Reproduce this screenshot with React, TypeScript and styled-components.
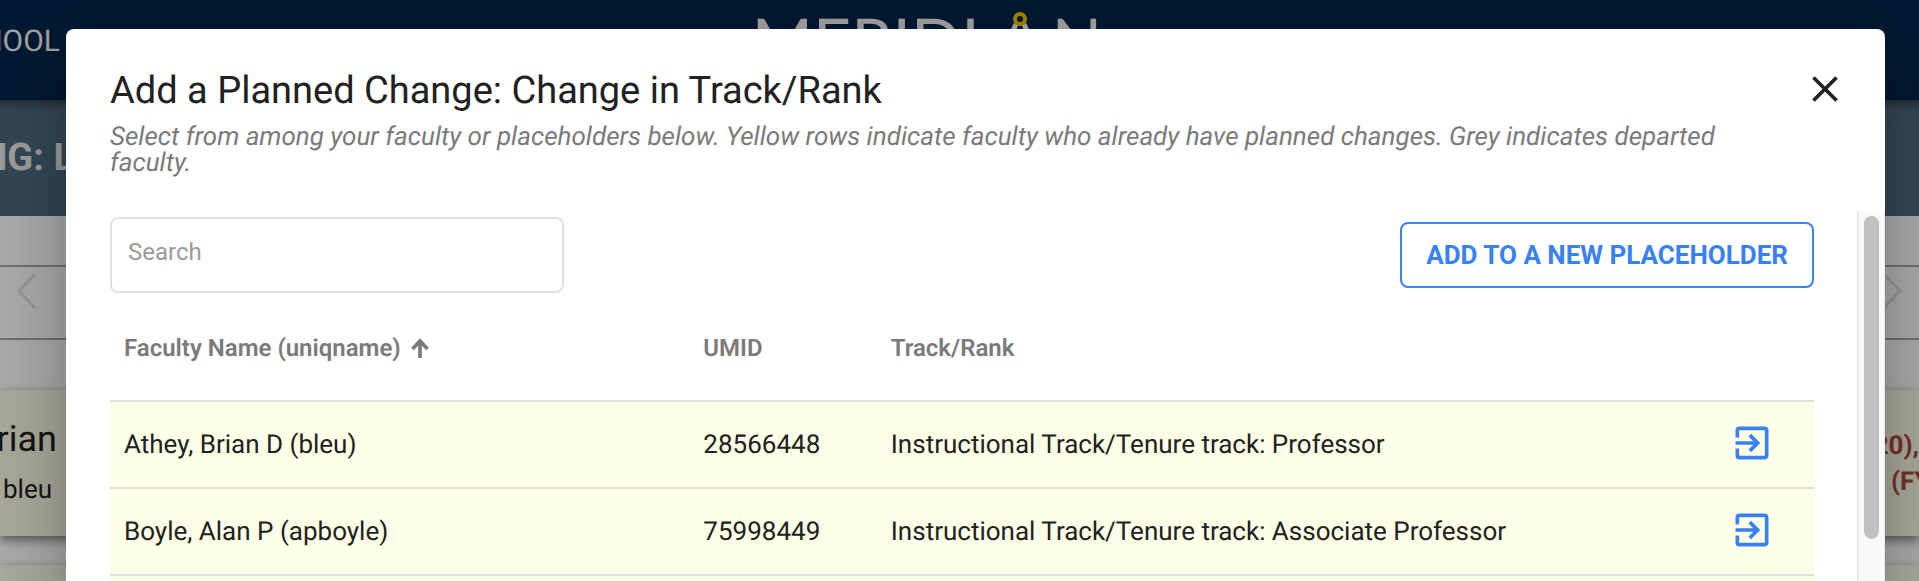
import React from "react";
import styled, { createGlobalStyle } from "styled-components";
import { MdClose, MdExitToApp } from "react-icons/md";

const GlobalStyle = createGlobalStyle`
  *, *::before, *::after { box-sizing: border-box; }
  body {
    margin: 0;
    font-family: Roboto, "Liberation Sans", sans-serif;
    font-size: 26px;
    color: #212121;
    background: #ffffff;
    text-rendering: geometricPrecision;
  }
`;

const Screen = styled.div`
  position: relative;
  height: 100vh;
  overflow: hidden;
`;

const Page = styled.div`
  display: flex;
  flex-direction: column;
`;

const Masthead = styled.header`
  display: grid;
  grid-template-columns: 60px 1fr 60px;
  height: 100px;
  background: #00274c;
  color: #f0f0f0;
`;

const SchoolName = styled.div`
  display: flex;
  justify-content: flex-end;
  padding-top: 16px;
  font-size: 30px;
  line-height: 52px;
`;

const Wordmark = styled.div`
  display: flex;
  justify-content: center;
  padding-top: 5px;
  padding-right: 65px;
  font: 400 66px/74px Lato, "Open Sans", sans-serif;
`;

const CompassIcon = styled.svg`
  width: 72px;
  height: 72px;
`;

const PlanBar = styled.div`
  display: flex;
  height: 116px;
  align-items: center;
  background: #4f6a80;
  box-shadow: inset 0 12px 10px -8px rgba(0, 0, 0, 0.4);
`;

const PlanTitle = styled.div`
  display: flex;
  justify-content: flex-end;
  width: 74px;
  color: #eaeaea;
  font-size: 38px;
  font-weight: 700;
  white-space: nowrap;
`;

const YearStrip = styled.div`
  display: flex;
  justify-content: space-between;
  align-items: flex-start;
  height: 75px;
  margin-top: 49px;
  padding: 6px 17px 0;
  border-top: 2px solid #a8a8a8;
  border-bottom: 2px solid #a8a8a8;
`;

const Chevron = styled.svg`
  width: 20px;
  height: 36px;
  fill: none;
  stroke: #e2e2e2;
  stroke-width: 3;
`;

const CardList = styled.div`
  display: flex;
  flex-direction: column;
  gap: 29px;
  padding-top: 50px;
`;

const Card = styled.div`
  display: flex;
  justify-content: space-between;
  height: 146px;
  background: #fdfde8;
  box-shadow: 0 4px 10px rgba(0, 0, 0, 0.5);
`;

const Person = styled.div`
  display: flex;
  flex-direction: column;
  align-items: flex-end;
  width: 57px;
  padding-top: 25px;
`;

const PersonName = styled.div`
  font-size: 36px;
  line-height: 48px;
`;

const PersonId = styled.div`
  padding-right: 5px;
  line-height: 54px;
`;

const Notes = styled.div`
  width: 38px;
  padding-top: 38px;
  color: #b0493f;
  font-weight: 700;
  line-height: 36px;
  white-space: nowrap;
`;

const NoteEnd = styled.div`
  display: flex;
  justify-content: flex-end;
`;

const NoteStart = styled.div`
  padding-left: 10px;
`;

const Overlay = styled.div`
  position: absolute;
  inset: 0;
  display: flex;
  padding: 29px 34px 0 66px;
  background: rgba(0, 0, 0, 0.32);
`;

const Dialog = styled.section`
  flex: 1;
  display: flex;
  flex-direction: column;
  background: #ffffff;
  border-radius: 8px 8px 0 0;
  box-shadow: 0 22px 30px -14px rgba(0, 0, 0, 0.2),
    0 48px 76px 6px rgba(0, 0, 0, 0.14), 0 18px 92px 16px rgba(0, 0, 0, 0.12);
`;

const DialogHeader = styled.header`
  display: flex;
  justify-content: space-between;
  align-items: flex-start;
  height: 182px;
  padding: 38px 38px 0 44px;
`;

const Title = styled.h1`
  margin: 0;
  font-size: 38px;
  font-weight: 400;
  line-height: 48px;
`;

const Hint = styled.p`
  margin: 9px 0 0;
  color: #7a7a7a;
  font-style: italic;
  line-height: 26px;
`;

const HeaderText = styled.div`
  flex: 1;
  padding-right: 60px;
`;

const IconButton = styled.button`
  display: flex;
  padding: 0;
  border: 0;
  background: none;
  color: ${(p) => p.color};
  font-size: 44px;
  cursor: pointer;
`;

const DialogBody = styled.div`
  flex: 1;
  display: flex;
  min-height: 0;
`;

const Content = styled.div`
  flex: 1;
  padding: 6px 43px 0 44px;
  overflow: hidden;
`;

const Toolbar = styled.div`
  display: flex;
  justify-content: space-between;
  align-items: center;
`;

const SearchInput = styled.input`
  width: 454px;
  height: 76px;
  padding: 0 16px 6px;
  border: 2px solid #e0e0e0;
  border-radius: 8px;
  color: inherit;
  font: 24px Roboto, sans-serif;
  &::placeholder { color: #9a9a9a; opacity: 1; }
`;

const OutlineButton = styled.button`
  height: 66px;
  padding: 0 24px;
  border: 2px solid #3b82f6;
  border-radius: 8px;
  background: #ffffff;
  color: #3880f5;
  font: 700 26px Roboto, sans-serif;
  cursor: pointer;
`;

const Table = styled.table`
  width: 100%;
  border-collapse: collapse;
  table-layout: fixed;
`;

const Th = styled.th<{ $width?: string }>`
  width: ${(p) => p.$width ?? "auto"};
  height: 108px;
  padding: 2px 0 0 14px;
  color: #7a7a7a;
  font-size: 24px;
  font-weight: 600;
  text-align: left;
`;

const SortLabel = styled.span`
  display: flex;
  align-items: center;
  gap: 10px;
`;

const SortIcon = styled.svg`
  width: 18px;
  height: 20px;
  fill: none;
  stroke: currentColor;
`;

const Row = styled.tr`
  background: #fdffe7;
  border-top: 2px solid #dfe0d3;
`;

const Td = styled.td<{ $action?: boolean }>`
  height: 87px;
  padding: ${(p) => (p.$action ? "0 0 4px 14px" : "0 0 0 14px")};
`;

const ScrollTrack = styled.div`
  width: 28px;
  padding: 5px 5px 0;
  border-left: 2px solid #e8e8e8;
  border-right: 1px solid #e8e8e8;
  background: #fafafa;
`;

const ScrollThumb = styled.div`
  height: 323px;
  border-radius: 8px;
  background: #c1c1c1;
`;

const faculty = [
  { name: "Athey, Brian D (bleu)", id: "28566448", track: "Instructional Track/Tenure track: Professor" },
  { name: "Boyle, Alan P (apboyle)", id: "75998449", track: "Instructional Track/Tenure track: Associate Professor" },
];

export default function App() {
  return (
    <Screen>
      <GlobalStyle />
      <Page>
        <Masthead>
          <SchoolName>HOOL</SchoolName>
          <Wordmark>
            <span>MERIDI</span>
            <CompassIcon viewBox="0 0 72 72" fill="none" aria-hidden="true">
              <path d="M36 19L18 62M44 19L62 62" stroke="currentColor" strokeWidth="5" />
              <circle cx="40" cy="14" r="5" stroke="#f5c400" strokeWidth="4" />
            </CompassIcon>
            <span>N</span>
          </Wordmark>
        </Masthead>
        <PlanBar>
          <PlanTitle>NG: L</PlanTitle>
        </PlanBar>
        <YearStrip>
          <Chevron viewBox="0 0 20 36"><path d="M18 1L2 18L18 35" /></Chevron>
          <Chevron viewBox="0 0 20 36"><path d="M2 1L18 18L2 35" /></Chevron>
        </YearStrip>
        <CardList>
          <Card>
            <Person>
              <PersonName>rian</PersonName>
              <PersonId>bleu</PersonId>
            </Person>
            <Notes>
              <NoteEnd>20),</NoteEnd>
              <NoteStart>(FY</NoteStart>
            </Notes>
          </Card>
          <Card />
        </CardList>
      </Page>
      <Overlay>
        <Dialog role="dialog" aria-labelledby="dialog-title">
          <DialogHeader>
            <HeaderText>
              <Title id="dialog-title">Add a Planned Change: Change in Track/Rank</Title>
              <Hint>
                Select from among your faculty or placeholders below. Yellow rows indicate
                faculty who already have planned changes. Grey indicates departed faculty.
              </Hint>
            </HeaderText>
            <IconButton color="#212121" aria-label="Close"><MdClose /></IconButton>
          </DialogHeader>
          <DialogBody>
            <Content>
              <Toolbar>
                <SearchInput type="search" placeholder="Search" aria-label="Search" />
                <OutlineButton>ADD TO A NEW PLACEHOLDER</OutlineButton>
              </Toolbar>
              <Table>
                <thead>
                  <tr>
                    <Th $width="34%">
                      <SortLabel>
                        Faculty Name (uniqname)
                        <SortIcon viewBox="0 0 18 20" aria-hidden="true">
                          <path d="M9 20V3M1.5 11L9 3L16.5 11" strokeWidth="3.6" />
                        </SortIcon>
                      </SortLabel>
                    </Th>
                    <Th $width="11%">UMID</Th>
                    <Th>Track/Rank</Th>
                    <Th $width="98px" aria-label="Actions" />
                  </tr>
                </thead>
                <tbody>
                  {faculty.map((f) => (
                    <Row key={f.id}>
                      <Td>{f.name}</Td>
                      <Td>{f.id}</Td>
                      <Td>{f.track}</Td>
                      <Td $action>
                        <IconButton color="#3880f5" aria-label={`Select ${f.name}`}>
                          <MdExitToApp />
                        </IconButton>
                      </Td>
                    </Row>
                  ))}
                  <Row><Td colSpan={4} /></Row>
                </tbody>
              </Table>
            </Content>
            <ScrollTrack>
              <ScrollThumb />
            </ScrollTrack>
          </DialogBody>
        </Dialog>
      </Overlay>
    </Screen>
  );
}
